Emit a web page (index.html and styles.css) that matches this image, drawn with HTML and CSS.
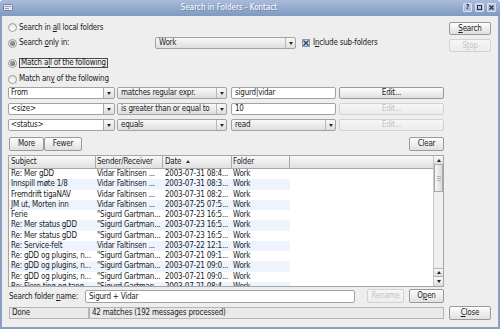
FILE: index.html
```html
<!DOCTYPE html>
<html lang="nb">
<head>
<meta charset="utf-8">
<title>Search in Folders - Kontact</title>
<link rel="stylesheet" href="styles.css">
</head>
<body>
<div class="window">
  <div class="titlebar">
    <svg class="appicon" width="10" height="7" viewBox="0 0 10 7"><rect x="0.5" y="0.5" width="9" height="6" rx="1" fill="#e6eaf1" stroke="#6f7f9c"/><path d="M2 2.5h6M2 4.5h4" stroke="#8c9ab3"/></svg>
    <div class="title">Search in Folders - Kontact</div>
    <div class="tbtns">
      <span class="tb">?</span>
      <span class="tb"><svg width="5" height="5" viewBox="0 0 5 5"><rect x="0.5" y="0.5" width="4" height="4" fill="none" stroke="#22324f"/></svg></span>
      <span class="tb"><svg width="5" height="5" viewBox="0 0 5 5"><path d="M0.5 0.5l4 4M4.5 0.5l-4 4" stroke="#22324f" stroke-width="1.2"/></svg></span>
    </div>
  </div>
  <div class="body">
    <div class="left">
      <div class="row r1"><span class="radio"></span><span class="lbl">Search in <u>a</u>ll local folders</span></div>
      <div class="row r2">
        <div class="onlyin"><span class="radio on"></span><span class="lbl">Search <u>o</u>nly in:</span></div>
        <div class="combo work"><span class="ctext">Work</span><span class="arr"></span></div>
        <span class="check"><svg width="6" height="6" viewBox="0 0 6 6"><path d="M0.5 0.5l5 5M5.5 0.5l-5 5" stroke="#2c3f66" stroke-width="1.3"/></svg></span>
        <span class="lbl sub">I<u>n</u>clude sub-folders</span>
      </div>
      <div class="row r3"><span class="radio on"></span><span class="lbl focus">Match a<u>l</u>l of the following</span></div>
      <div class="row r4"><span class="radio"></span><span class="lbl">Match an<u>y</u> of the following</span></div>

      <div class="rule first">
        <div class="ecombo f1"><span class="etext">From</span><span class="earr"></span></div>
        <div class="combo f2"><span class="ctext">matches regular expr.</span><span class="arr"></span></div>
        <div class="edit f3">sigurd|vidar</div>
        <div class="btn f4">Edit...</div>
      </div>
      <div class="rule">
        <div class="ecombo f1"><span class="etext">&lt;size&gt;</span><span class="earr"></span></div>
        <div class="combo f2"><span class="ctext">is greater than or equal to</span><span class="arr"></span></div>
        <div class="edit f3">10</div>
        <div class="btn f4 off">Edit...</div>
      </div>
      <div class="rule">
        <div class="ecombo f1"><span class="etext">&lt;status&gt;</span><span class="earr"></span></div>
        <div class="combo f2"><span class="ctext">equals</span><span class="arr"></span></div>
        <div class="combo f3"><span class="ctext">read</span><span class="arr"></span></div>
        <div class="btn f4 off">Edit...</div>
      </div>

      <div class="row more">
        <div class="btn b-more">More</div>
        <div class="btn b-fewer">Fewer</div>
        <div class="btn b-clear">Clear</div>
      </div>

      <div class="list">
        <div class="lv">
          <div class="hdr">
            <div class="c c1">Subject</div>
            <div class="c c2">Sender/Receiver</div>
            <div class="c c3">Date <span class="sort"></span></div>
            <div class="c c4">Folder</div>
            <div class="c c5"></div>
          </div>
          <div class="rows">
            <div class="it"><div class="c c1">Re: Mer gDD</div><div class="c c2">Vidar Faltinsen ...</div><div class="c c3">2003-07-31 08:4...</div><div class="c c4">Work</div></div>
            <div class="it alt"><div class="c c1">Innspill møte 1/8</div><div class="c c2">Vidar Faltinsen ...</div><div class="c c3">2003-07-31 08:3...</div><div class="c c4">Work</div></div>
            <div class="it"><div class="c c1">Fremdrift tigaNAV</div><div class="c c2">Vidar Faltinsen ...</div><div class="c c3">2003-07-31 08:2...</div><div class="c c4">Work</div></div>
            <div class="it alt"><div class="c c1">JM ut, Morten inn</div><div class="c c2">Vidar Faltinsen ...</div><div class="c c3">2003-07-25 07:5...</div><div class="c c4">Work</div></div>
            <div class="it"><div class="c c1">Ferie</div><div class="c c2">"Sigurd Gartman...</div><div class="c c3">2003-07-23 16:5...</div><div class="c c4">Work</div></div>
            <div class="it alt"><div class="c c1">Re: Mer status gDD</div><div class="c c2">"Sigurd Gartman...</div><div class="c c3">2003-07-23 16:5...</div><div class="c c4">Work</div></div>
            <div class="it"><div class="c c1">Re: Mer status gDD</div><div class="c c2">"Sigurd Gartman...</div><div class="c c3">2003-07-23 16:5...</div><div class="c c4">Work</div></div>
            <div class="it alt"><div class="c c1">Re: Service-felt</div><div class="c c2">Vidar Faltinsen ...</div><div class="c c3">2003-07-22 12:1...</div><div class="c c4">Work</div></div>
            <div class="it"><div class="c c1">Re: gDD og plugins, n...</div><div class="c c2">"Sigurd Gartman...</div><div class="c c3">2003-07-21 09:1...</div><div class="c c4">Work</div></div>
            <div class="it alt"><div class="c c1">Re: gDD og plugins, n...</div><div class="c c2">"Sigurd Gartman...</div><div class="c c3">2003-07-21 09:0...</div><div class="c c4">Work</div></div>
            <div class="it"><div class="c c1">Re: gDD og plugins, n...</div><div class="c c2">"Sigurd Gartman...</div><div class="c c3">2003-07-21 09:0...</div><div class="c c4">Work</div></div>
            <div class="it alt"><div class="c c1">Re: Flere ting og tang</div><div class="c c2">"Sigurd Gartman...</div><div class="c c3">2003-07-21 08:4...</div><div class="c c4">Work</div></div>
          </div>
        </div>
        <div class="sb">
          <div class="sbtn up"></div>
          <div class="slider"><span></span><span></span><span></span></div>
          <div class="track"></div>
          <div class="sbtn up top"></div>
          <div class="sbtn down"></div>
        </div>
      </div>

      <div class="row name">
        <span class="nlabel">Search folder <u>n</u>ame:</span>
        <div class="edit nedit">Sigurd + Vidar</div>
        <div class="btn off b-rename">Rename</div>
        <div class="btn b-open">O<u>p</u>en</div>
      </div>

      <div class="row status">
        <div class="sfield s1">Done</div>
        <div class="sfield s2">42 matches (192 messages processed)</div>
      </div>
    </div>

    <div class="right">
      <div class="btn b-search"><span><u>S</u>earch</span></div>
      <div class="btn off b-stop">S<u>t</u>op</div>
      <div class="btn b-close"><u>C</u>lose</div>
    </div>
  </div>
</div>
</body>
</html>
```

FILE: styles.css
```css
* { box-sizing: border-box; margin: 0; padding: 0; }
html, body { width: 500px; height: 329px; overflow: hidden; background: #ffffff; }
body {
  font-family: "DejaVu Sans Condensed", "DejaVu Sans", sans-serif;
  font-size: 8px;
  letter-spacing: -0.22px;
  color: #1c1c1c;
}
u { text-decoration: underline; text-underline-offset: 1px; text-decoration-thickness: 1px; }

.window {
  width: 500px; height: 329px;
  display: flex; flex-direction: column;
  background: #8aa0c3;
  border-radius: 4px 4px 0 0;
  overflow: hidden;
}
.titlebar {
  height: 16px; flex: none;
  display: flex; align-items: center;
  padding: 0 4px 0 3px;
  background: linear-gradient(#a9bcd9, #7f99c1);
  color: #fff;
}
.appicon { flex: none; margin-top: -1px; }
.title {
  flex: 1; text-align: center;
  font-size: 8px; line-height: 16px;
  padding-right: 18px;
  letter-spacing: 0;
  text-shadow: 1px 1px 0 rgba(40, 60, 100, 0.35);
  white-space: nowrap;
}
.tbtns { display: flex; gap: 3px; margin-top: -2px; }
.tb {
  width: 9px; height: 9px;
  display: flex; align-items: center; justify-content: center;
  background: linear-gradient(#c3d1e6, #a4b8d6);
  border: 1px solid #d6e0ee;
  border-radius: 1px;
  font-size: 7px; font-weight: bold; line-height: 7px; color: #22324f;
}

.body {
  flex: 1;
  margin: 0 2px 2px 2px;
  background: #eeeeee;
  display: flex; gap: 5px;
  padding: 6px 7px 7px 6px;
}
.left { width: 436px; flex: none; display: flex; flex-direction: column; }
.right { width: 42px; flex: none; display: flex; flex-direction: column; }

.row { display: flex; align-items: center; flex: none; }
.r1 { height: 11px; }
.r2 { height: 12px; margin-top: 4px; }
.r3 { height: 10px; margin-top: 9px; }
.r4 { height: 10px; margin-top: 6px; }
.more { height: 14px; margin-top: 6px; }
.name { height: 14px; margin-top: 2px; }
.status { height: 12px; margin-top: 4px; }

.lbl { margin-left: 2px; white-space: nowrap; line-height: 10px; }
.focus { border: 1px solid #4a4a4a; padding: 0 1px 0 1px; line-height: 8px; height: 10px; margin-left: 2px; }

.radio {
  width: 9px; height: 9px; flex: none;
  border-radius: 50%;
  border: 1px solid #9a9a9a;
  background: linear-gradient(#e4e4e4, #ffffff);
  display: flex; align-items: center; justify-content: center;
}
.radio.on::after {
  content: ""; width: 5px; height: 5px; border-radius: 50%;
  background: radial-gradient(circle at 40% 40%, #a4a4a4, #5a5a5a);
}

.onlyin { width: 147px; display: flex; align-items: center; flex: none; }

.combo {
  height: 12px; flex: none;
  display: flex; align-items: stretch;
  border: 1px solid #a2a2a2; border-radius: 2px;
  background: linear-gradient(#f8f8f8, #dedede);
  overflow: hidden;
}
.ctext { flex: 1; padding-left: 3px; line-height: 10px; white-space: nowrap; overflow: hidden; }
.arr {
  width: 10px; flex: none;
  border-left: 1px solid #b8b8b8;
  display: flex; align-items: center; justify-content: center;
}
.arr::after, .earr::after {
  content: ""; width: 0; height: 0;
  border-left: 2px solid transparent; border-right: 2px solid transparent;
  border-top: 3px solid #2a2a2a;
}
.work { width: 141px; }

.check {
  width: 8px; height: 8px; flex: none;
  margin-left: 6px;
  border: 1px solid #8a96ad;
  background: linear-gradient(#dfe5ef, #c6d0e0);
  display: flex; align-items: center; justify-content: center;
}
.sub { margin-left: 3px; }

.rule { display: flex; height: 12px; margin-top: 4px; flex: none; }
.rule.first { margin-top: 3px; }
.f1 { width: 107px; }
.f2 { width: 110px; margin-left: 2px; }
.f3 { width: 105px; margin-left: 4px; }
.f4 { width: 105px; margin-left: 3px; }

.ecombo {
  flex: none; display: flex;
  border: 1px solid #a2a2a2; border-radius: 2px;
  background: #fff; overflow: hidden;
}
.etext { flex: 1; padding-left: 2px; line-height: 10px; white-space: nowrap; }
.earr {
  width: 11px; flex: none;
  border-left: 1px solid #a8a8a8;
  background: linear-gradient(#f8f8f8, #dedede);
  display: flex; align-items: center; justify-content: center;
}

.edit {
  flex: none;
  border: 1px solid #a2a2a2; border-radius: 2px;
  background: #fff;
  padding-left: 3px; line-height: 10px; white-space: nowrap; overflow: hidden;
}

.btn {
  flex: none;
  display: flex; align-items: center; justify-content: center;
  border: 1px solid #9a9a9a; border-radius: 2px;
  background: linear-gradient(#fdfdfd, #e0e0e0);
  white-space: nowrap; line-height: 10px;
}
.btn.off {
  border-color: #d2d2d2;
  background: linear-gradient(#f6f6f6, #ececec);
  color: #c4c4c4;
}
.b-more { width: 35px; height: 14px; margin-left: 1px; }
.b-fewer { width: 38px; height: 14px; }
.b-clear { width: 35px; height: 14px; margin-left: auto; }

.list {
  height: 132px; margin-top: 4px; flex: none;
  border: 1px solid #a6a6a6;
  background: #fff;
  display: flex;
  overflow: hidden;
}
.lv { flex: 1; display: flex; flex-direction: column; overflow: hidden; }
.hdr {
  display: flex; height: 13px; flex: none;
  background: linear-gradient(#f8f8f8, #e0e0e0);
  border-bottom: 1px solid #a8a8a8;
}
.hdr .c { border-right: 1px solid #aaaaaa; line-height: 12px; }
.c { flex: none; padding-left: 2px; white-space: nowrap; overflow: hidden; }
.c1 { width: 87px; }
.c2 { width: 67px; padding-left: 1px; }
.c3 { width: 69px; }
.c4 { width: 58px; padding-left: 1px; }
.c5 { flex: 1; }
.hdr .c5 { border-right: none; }
.sort {
  display: inline-block; width: 0; height: 0; vertical-align: 1px; margin-left: 3px;
  border-left: 2px solid transparent; border-right: 2px solid transparent;
  border-bottom: 3px solid #333;
}
.rows { flex: 1; overflow: hidden; }
.it { display: flex; height: 10.25px; line-height: 10.25px; }
.it.alt .c { background: #edf4fd; }

.sb {
  width: 10px; flex: none;
  border-left: 1px solid #c6c6c6;
  background: #f0f0f0;
  display: flex; flex-direction: column;
}
.sbtn {
  height: 9px; flex: none;
  background: linear-gradient(#fafafa, #dcdcdc);
  border-bottom: 1px solid #b2b2b2;
  display: flex; align-items: center; justify-content: center;
}
.sbtn.top { border-top: 1px solid #b2b2b2; }
.sbtn.down { border-bottom: none; }
.sbtn.up::after {
  content: ""; width: 0; height: 0;
  border-left: 2px solid transparent; border-right: 2px solid transparent;
  border-bottom: 3px solid #222;
}
.sbtn.down::after {
  content: ""; width: 0; height: 0;
  border-left: 2px solid transparent; border-right: 2px solid transparent;
  border-top: 3px solid #222;
}
.slider {
  height: 27px; flex: none;
  border: 1px solid #a8a8a8; border-top: none;
  background: linear-gradient(90deg, #f6f6f6, #dadada);
  display: flex; flex-direction: column; align-items: center; justify-content: center; gap: 1px;
}
.slider span { width: 4px; height: 1px; background: #b4b4b4; }
.track { flex: 1; }

.nlabel { width: 77px; flex: none; padding-left: 1px; white-space: nowrap; }
.nedit { width: 270px; height: 13px; line-height: 11px; }
.b-rename { width: 37px; height: 14px; margin-left: 12px; }
.b-open { width: 35px; height: 14px; margin-left: 5px; }

.sfield {
  height: 12px; flex: none;
  border: 1px solid #b6b6b6;
  background: #e9e9e9;
  padding-left: 2px; line-height: 10px; white-space: nowrap;
}
.s1 { width: 80px; margin-left: 1px; }
.s2 { width: 355px; }

.b-search { height: 13px; }
.b-stop { height: 13px; margin-top: 4px; }
.b-close { height: 14px; margin-top: auto; }
```
